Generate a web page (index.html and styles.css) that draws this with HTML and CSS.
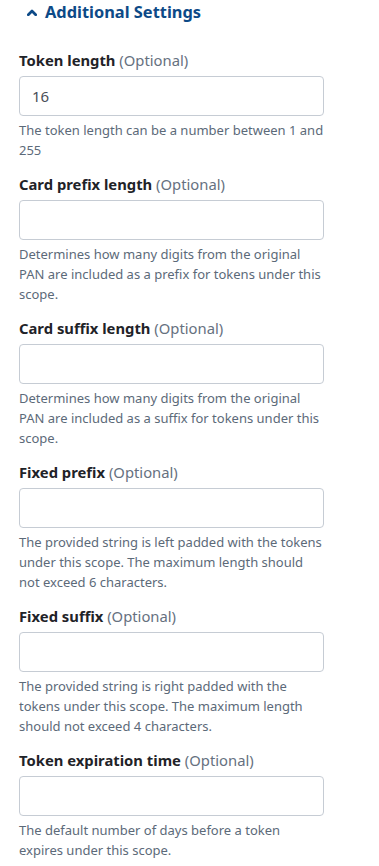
FILE: index.html
```html
<!DOCTYPE html>
<html lang="en">
<head>
<meta charset="utf-8">
<title>Additional Settings</title>
<link rel="stylesheet" href="styles.css">
</head>
<body>
<section class="settings">
  <h2 class="settings-toggle">
    <svg class="chevron" width="10" height="7" viewBox="0 0 10 7" aria-hidden="true"><path d="M1.3 5.7 L5 2 L8.7 5.7" fill="none" stroke="currentColor" stroke-width="2.7" stroke-linecap="round" stroke-linejoin="round"/></svg>
    <span>Additional Settings</span>
  </h2>
  <div class="fields">
    <div class="field">
      <label class="label">Token length <span class="opt">(Optional)</span></label>
      <input class="input" type="text" value="16">
      <p class="help">The token length can be a number between 1 and 255</p>
    </div>
    <div class="field">
      <label class="label">Card prefix length <span class="opt">(Optional)</span></label>
      <input class="input" type="text">
      <p class="help">Determines how many digits from the original PAN are included as a prefix for tokens under this scope.</p>
    </div>
    <div class="field">
      <label class="label">Card suffix length <span class="opt">(Optional)</span></label>
      <input class="input" type="text">
      <p class="help">Determines how many digits from the original PAN are included as a suffix for tokens under this scope.</p>
    </div>
    <div class="field">
      <label class="label">Fixed prefix <span class="opt">(Optional)</span></label>
      <input class="input" type="text">
      <p class="help">The provided string is left padded with the tokens under this scope. The maximum length should not exceed 6 characters.</p>
    </div>
    <div class="field">
      <label class="label">Fixed suffix <span class="opt">(Optional)</span></label>
      <input class="input" type="text">
      <p class="help">The provided string is right padded with the tokens under this scope. The maximum length should not exceed 4 characters.</p>
    </div>
    <div class="field">
      <label class="label">Token expiration time <span class="opt">(Optional)</span></label>
      <input class="input" type="text">
      <p class="help">The default number of days before a token expires under this scope.</p>
    </div>
  </div>
</section>
</body>
</html>
```
FILE: styles.css
```css
* { box-sizing: border-box; }
html, body {
  margin: 0;
  padding: 0;
  background: #ffffff;
  font-family: "Noto Sans", "Open Sans", sans-serif;
}
.settings {
  padding: 0 0 0 19px;
  width: 324px;
}
.settings-toggle {
  margin: 0 0 26px 0;
  padding-left: 8px;
  display: flex;
  align-items: center;
  gap: 8px;
  height: 24px;
  font-size: 16.4px;
  line-height: 24px;
  font-weight: 700;
  color: #0d4a87;
}
.chevron { flex: none; display: block; margin-top: 1px; }
.fields {
  display: flex;
  flex-direction: column;
  gap: 14px;
}
.field {
  display: flex;
  flex-direction: column;
}
.label {
  font-size: 14.8px;
  line-height: 20px;
  font-weight: 700;
  color: #1f2328;
  margin-bottom: 6px;
}
.opt {
  font-weight: 400;
  color: #66717f;
}
.input {
  width: 305px;
  height: 40px;
  border: 1px solid #c6ccd4;
  border-radius: 4px;
  padding: 0 12px;
  font-family: inherit;
  font-size: 15px;
  color: #4a4f57;
  background: #fff;
  outline: none;
}
.help {
  margin: 4px 0 0 0;
  width: 305px;
  font-size: 13px;
  line-height: 20px;
  color: #5c6a79;
}
```
